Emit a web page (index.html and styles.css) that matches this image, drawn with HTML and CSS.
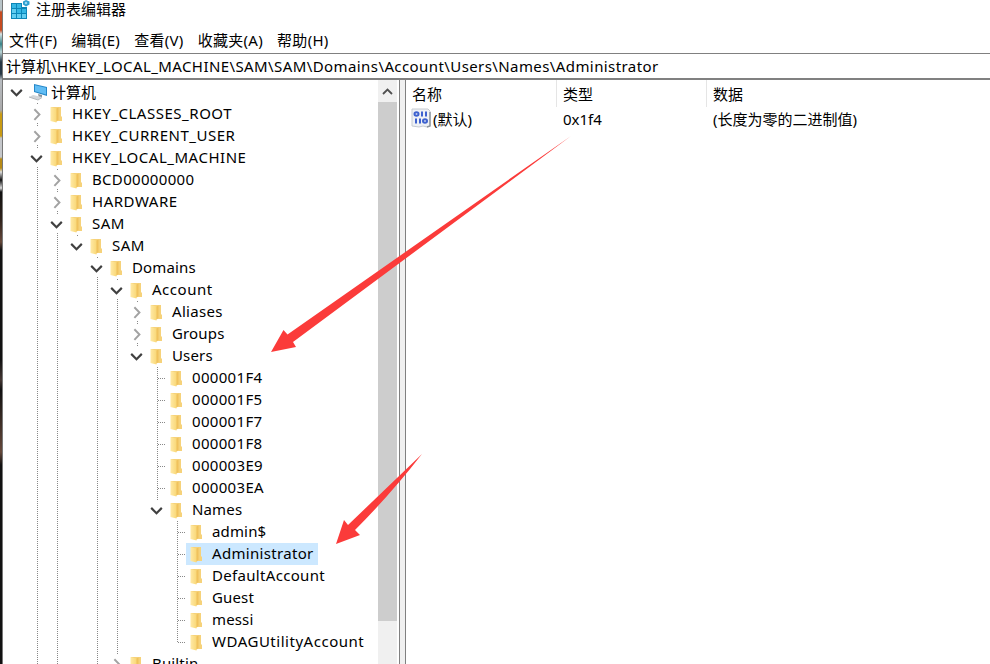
FILE: index.html
```html
<!DOCTYPE html>
<html lang="zh-CN">
<head>
  <meta charset="UTF-8" />
  <title>注册表编辑器</title>
  <link rel="stylesheet" href="styles.css">
</head>
<body>

  <svg class="defs" width="0" height="0">
    <linearGradient id="fold" x1="0" x2="1" y1="0" y2="0">
      <stop offset="0" stop-color="#ffe9a6" />
      <stop offset="1" stop-color="#f9d877" />
    </linearGradient>
    <symbol id="folder" viewBox="0 0 16 18">
      <path d="M3 2h10v9l1 1v4H3z" fill="#f6d27a" />
      <path d="M2.500 2l6 1.500V17.500l-6-1.500z" fill="url(#fold)" />
      <path d="M8.500 3.500l2-1v12l-2 2.500z" fill="#f0c25c" />
    </symbol>
    <symbol id="open" viewBox="0 0 16 16">
      <path d="M3 6l5 5 5-5" fill="none" stroke="#404040" stroke-width="2" />
    </symbol>
    <symbol id="closed" viewBox="0 0 16 16">
      <path d="M6 3.500l4.800 5-4.800 5" fill="none" stroke="#a2a2a2" stroke-width="1.800" />
    </symbol>
  </svg>

  <div class="desktop"></div>
  <div class="window">
    <header class="titlebar">
      <svg class="app-icon" width="22" height="20" viewBox="0 0 22 20">
        <path d="M2 3h11v4h5v12H2z" fill="#0c86b8" />
        <path d="M3 4h4v4H3zM8 4h4v4H8zM8 9h4v4H8zM13 9h4v4h-4z" fill="#35b7e4" />
        <path d="M3 9h4v4H3zM3 14h4v4H3zM8 14h4v4H8zM13 14h4v4h-4z" fill="#62cdf0" />
        <path d="M17 0l3.500 1.500v3L17 6.500l-3-2v-3z" fill="#2d9fd0" />
        <path d="M17 1.500l1.500 1.500L17 4.500 15.500 3z" fill="#a5e0f5" />
      </svg>
      <span>注册表编辑器</span>
    </header>
    <nav class="menu">
      <span>文件(F)</span>
      <span>编辑(E)</span>
      <span>查看(V)</span>
      <span>收藏夹(A)</span>
      <span>帮助(H)</span>
    </nav>
    <div class="address">计算机<span>\HKEY_LOCAL_MACHINE\SAM\SAM\Domains\Account\Users\Names\Administrator</span></div>

    <main class="panes">
      <div class="tree">
        <div class="row root">
          <svg class="expander"><use href="#open" /></svg>
          <svg class="computer" width="20" height="18" viewBox="0 0 20 18">
            <path d="M5 1l13 3v9L5 9z" fill="#2587c8" />
            <path d="M6 2.300l11 2.500v6.700L6 8.300z" fill="#62bdf4" />
            <path d="M9 11l4 1v2l-3 1z" fill="#8c9298" />
            <path d="M0 14l4-2 9 2-4 3z" fill="#d3d6d9" />
            <path d="M0 14l9 3 4-2.500" fill="none" stroke="#b4b8bb" />
          </svg>
          <span>计算机</span>
        </div>
        <ul>
          <li><div class="row caps"><svg class="expander"><use href="#closed" /></svg><svg class="folder"><use href="#folder" /></svg><span>HKEY_CLASSES_ROOT</span></div></li>
          <li><div class="row caps"><svg class="expander"><use href="#closed" /></svg><svg class="folder"><use href="#folder" /></svg><span>HKEY_CURRENT_USER</span></div></li>
          <li>
            <div class="row caps"><svg class="expander"><use href="#open" /></svg><svg class="folder"><use href="#folder" /></svg><span>HKEY_LOCAL_MACHINE</span></div>
            <ul>
              <li><div class="row long"><svg class="expander"><use href="#closed" /></svg><svg class="folder"><use href="#folder" /></svg><span>BCD00000000</span></div></li>
              <li><div class="row caps"><svg class="expander"><use href="#closed" /></svg><svg class="folder"><use href="#folder" /></svg><span>HARDWARE</span></div></li>
              <li>
                <div class="row caps"><svg class="expander"><use href="#open" /></svg><svg class="folder"><use href="#folder" /></svg><span>SAM</span></div>
                <ul>
                  <li class="last">
                    <div class="row caps"><svg class="expander"><use href="#open" /></svg><svg class="folder"><use href="#folder" /></svg><span>SAM</span></div>
                    <ul>
                      <li>
                        <div class="row"><svg class="expander"><use href="#open" /></svg><svg class="folder"><use href="#folder" /></svg><span>Domains</span></div>
                        <ul>
                          <li>
                            <div class="row caps"><svg class="expander"><use href="#open" /></svg><svg class="folder"><use href="#folder" /></svg><span>Account</span></div>
                            <ul>
                              <li><div class="row long"><svg class="expander"><use href="#closed" /></svg><svg class="folder"><use href="#folder" /></svg><span>Aliases</span></div></li>
                              <li><div class="row"><svg class="expander"><use href="#closed" /></svg><svg class="folder"><use href="#folder" /></svg><span>Groups</span></div></li>
                              <li class="last">
                                <div class="row"><svg class="expander"><use href="#open" /></svg><svg class="folder"><use href="#folder" /></svg><span>Users</span></div>
                                <ul>
                                  <li><div class="row leaf long"><svg class="folder"><use href="#folder" /></svg><span>000001F4</span></div></li>
                                  <li><div class="row leaf long"><svg class="folder"><use href="#folder" /></svg><span>000001F5</span></div></li>
                                  <li><div class="row leaf long"><svg class="folder"><use href="#folder" /></svg><span>000001F7</span></div></li>
                                  <li><div class="row leaf long"><svg class="folder"><use href="#folder" /></svg><span>000001F8</span></div></li>
                                  <li><div class="row leaf long"><svg class="folder"><use href="#folder" /></svg><span>000003E9</span></div></li>
                                  <li><div class="row leaf long"><svg class="folder"><use href="#folder" /></svg><span>000003EA</span></div></li>
                                  <li class="last">
                                    <div class="row"><svg class="expander"><use href="#open" /></svg><svg class="folder"><use href="#folder" /></svg><span>Names</span></div>
                                    <ul>
                                      <li><div class="row leaf"><svg class="folder"><use href="#folder" /></svg><span>admin$</span></div></li>
                                      <li><div class="row leaf long selected"><svg class="folder"><use href="#folder" /></svg><span>Administrator</span></div></li>
                                      <li><div class="row leaf long"><svg class="folder"><use href="#folder" /></svg><span>DefaultAccount</span></div></li>
                                      <li><div class="row leaf"><svg class="folder"><use href="#folder" /></svg><span>Guest</span></div></li>
                                      <li><div class="row leaf"><svg class="folder"><use href="#folder" /></svg><span>messi</span></div></li>
                                      <li class="last"><div class="row leaf caps"><svg class="folder"><use href="#folder" /></svg><span>WDAGUtilityAccount</span></div></li>
                                    </ul>
                                  </li>
                                </ul>
                              </li>
                            </ul>
                          </li>
                          <li><div class="row"><svg class="expander"><use href="#closed" /></svg><svg class="folder"><use href="#folder" /></svg><span>Builtin</span></div></li>
                        </ul>
                      </li>
                    </ul>
                  </li>
                </ul>
              </li>
            </ul>
          </li>
        </ul>
      </div>

      <div class="scrollbar">
        <svg class="up" width="19" height="22" viewBox="0 0 19 22"><path d="M5 14l4.500-4.500L14 14" fill="none" stroke="#505050" stroke-width="1.800" /></svg>
        <div class="thumb"></div>
      </div>
      <div class="splitter"></div>

      <section class="values">
        <div class="columns">
          <span>名称</span>
          <span>类型</span>
          <span>数据</span>
        </div>
        <div class="columns value">
          <span class="name">
            <svg width="20" height="20" viewBox="0 0 20 20">
              <path d="M1 1h16l2 2v15l-3 1-4-1-4 1-7-1z" fill="#eef1f5" stroke="#c6cbd1" />
              <path d="M19 4v14l-3 1" fill="none" stroke="#8d959e" stroke-width="1.500" />
              <g fill="none" stroke="#3e62cf" stroke-width="2">
                <ellipse cx="5.500" cy="6" rx="2" ry="1.800" />
                <ellipse cx="10.500" cy="6" rx="1.500" ry="1.800" stroke="none" />
                <path d="M11 3.500v5M15 3.500v5M5 10.500v5M9 10.500v5" />
                <ellipse cx="14" cy="13" rx="2" ry="1.800" />
              </g>
            </svg>(默认)</span>
          <span>0x1f4</span>
          <span>(长度为零的二进制值)</span>
        </div>
      </section>
    </main>
  </div>

  <svg class="arrows" width="990" height="664" viewBox="0 0 990 664">
    <path d="M571 136L287.500 334.500 283.500 330 271 352 296 347 293 342z" fill="#fb3b3a" />
    <path d="M422 454L348 525 344 520 336 544 360 535 355 530Q390 495 422 454z" fill="#fb3b3a" />
  </svg>

</body>
</html>
```

FILE: styles.css
```css
* {
  box-sizing: border-box;
}
body {
  margin: 0;
  width: 990px;
  height: 664px;
  overflow: hidden;
  display: flex;
  font-family: "Noto Sans", "Noto Sans CJK SC", sans-serif;
  font-size: 15px;
  line-height: 22px;
  color: #000;
  background: #fff;
}
.defs {
  position: absolute;
}
svg {
  flex: none;
}
.desktop {
  width: 2px;
  background: linear-gradient(#b9c4c8 0, #b9c4c8 10px, #c64b20 12px, #c64b20 30px, #d5e2e4 34px, #378287 44px, #b9d4d6 52px, #273744 62px, #273744 74px, #b8bcc0 80px, #aaa 110px, #c99b13 114px, #c99b13 136px, #c5c7ca 138px, #c5c7ca 157px, #b78a16 159px, #b78a16 168px, #ddd 172px, #111 180px, #ddd 188px, #111 192px, #30231c 220px, #65483a 242px, #111 250px, #111 360px, #443733 380px, #111 390px, #65483a 452px, #111 465px);
}
.window {
  flex: 1;
  min-width: 0;
  display: flex;
  flex-direction: column;
  border-left: 1px solid #777;
}
.titlebar {
  height: 29px;
  padding-left: 6px;
  display: flex;
  gap: 5px;
}
.titlebar span {
  margin-top: -2px;
}
.menu {
  height: 24px;
  padding-left: 6px;
  display: flex;
  gap: 14px;
  letter-spacing: 0.3px;
}
.address {
  height: 27px;
  padding: 1px 3px;
  border-top: 1px solid #808080;
  border-bottom: 2px solid #808080;
  white-space: nowrap;
}
.address span {
  letter-spacing: 0.41px;
}
.panes {
  flex: 1;
  min-height: 0;
  display: flex;
}
.tree {
  width: 375px;
  padding-top: 1px;
  overflow: hidden;
}
.tree ul {
  list-style: none;
  margin: 0;
  padding: 0 0 0 20px;
}
.tree li {
  position: relative;
}
.tree li::before {
  content: "";
  position: absolute;
  left: 14px;
  top: 0;
  bottom: 0;
  width: 1px;
  background: repeating-linear-gradient(#888 0 1px, #fff 1px 2px);
}
.tree li.last::before {
  bottom: auto;
  height: 11px;
}
.row {
  position: relative;
  width: max-content;
  height: 22px;
  padding-left: 5px;
  display: flex;
  align-items: center;
  white-space: nowrap;
  letter-spacing: 0.15px;
}
.row span {
  margin-bottom: 2px;
}
.root span {
  margin-bottom: 0;
  letter-spacing: 0;
}
.long {
  letter-spacing: 0.32px;
}
.caps {
  letter-spacing: 0.52px;
}
.expander {
  width: 17px;
  height: 18px;
  background: #fff;
}
.folder {
  width: 16px;
  height: 18px;
  margin: 0 8px 1px 3px;
}
.computer {
  margin: 0 2px 0 4px;
}
.leaf {
  margin-left: 23px;
  padding: 0 4px 0 0;
}
.leaf .folder {
  margin-left: 2px;
}
.leaf::before {
  content: "";
  position: absolute;
  left: -8px;
  top: 11px;
  width: 8px;
  height: 1px;
  background: repeating-linear-gradient(90deg, #888 0 1px, #fff 1px 2px);
}
.selected {
  background: #cce8ff;
}
.scrollbar {
  width: 19px;
  background: #f0f0f0;
}
.up {
  display: block;
}
.thumb {
  height: 519px;
  background: #cdcdcd;
}
.splitter {
  width: 7px;
  margin-left: 2px;
  background: #f0f0f0;
  border: solid #808080;
  border-width: 0 1px;
}
.values {
  flex: 1;
}
.columns {
  height: 27px;
  display: grid;
  grid-template-columns: 151px 150px 1fr;
}
.columns > span {
  padding: 3px 0 0 6px;
  border-right: 1px solid #e5e5e5;
}
.columns > span:last-child {
  border: none;
}
.value > span {
  padding-top: 1px;
  border: none;
}
.columns .name {
  display: flex;
  gap: 2px;
  padding-left: 5px;
}
.value .name {
  padding-top: 1px;
}
.arrows {
  position: absolute;
  left: 0;
  top: 0;
}
```
